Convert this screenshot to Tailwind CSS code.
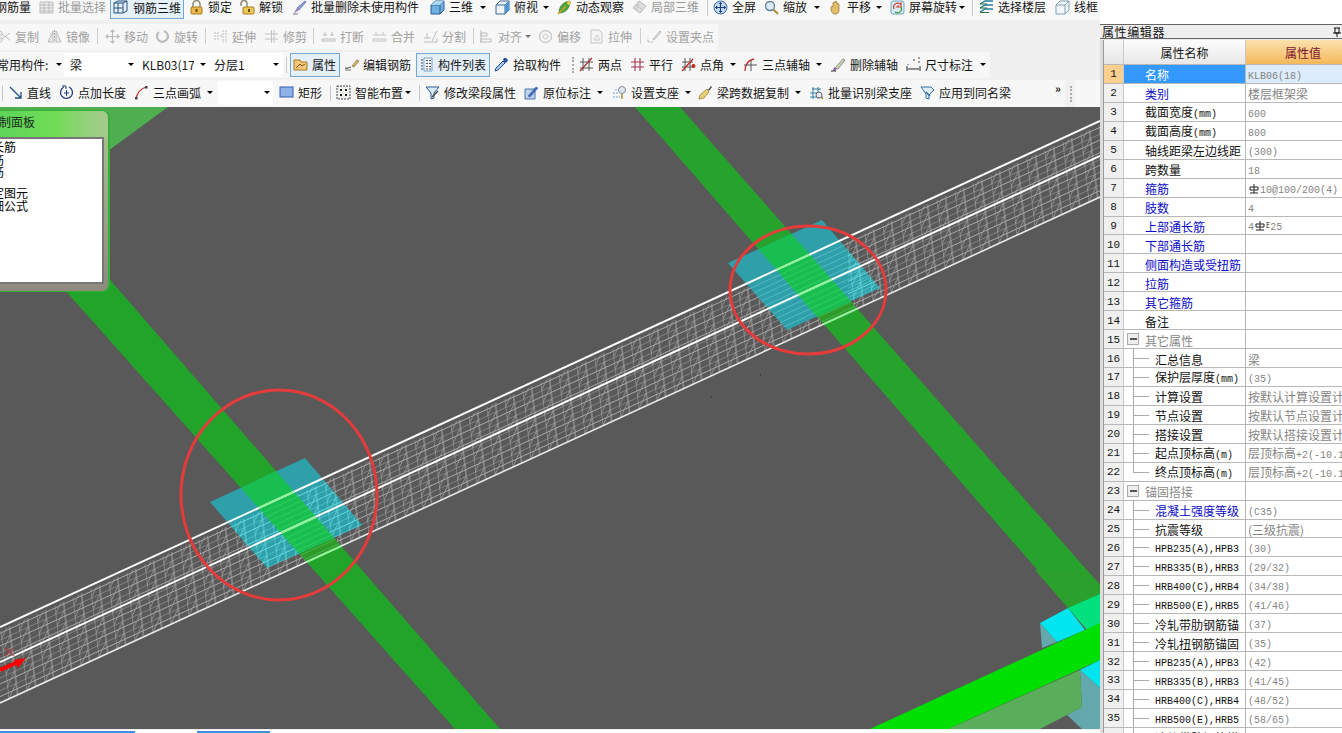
<!DOCTYPE html>
<html lang="zh">
<head>
<meta charset="UTF-8">
<title>属性编辑器</title>
<script src="https://cdn.jsdelivr.net/npm/@tailwindcss/browser@4"></script>
</head>
<body class="bg-[#f0f0f0]">
<!-- toolbar icons -->
<svg class="hidden">
  <symbol id="i-batch" viewBox="0 0 15 15"><path d="M1 2h13v11H1zM1 5h13M1 8h13M1 11h13M5 2v11M10 2v11" fill="#eee" stroke="#bbb"/></symbol>
  <symbol id="i-bar3d" viewBox="0 0 15 15"><path d="M1 3h9v10H1zM1 3l4-2h9l-4 2M14 1v10l-4 2M1 8h9M5 3v10" fill="none" stroke="#24517f"/></symbol>
  <symbol id="i-lock" viewBox="0 0 15 15"><path d="M4 7V4a3.500 3.500 0 0 1 7 0v3" fill="none" stroke="#8a8a70" stroke-width="1.500"/><rect x="2" y="7" width="11" height="7" rx="1" fill="#e9b949" stroke="#a67c1c"/><rect x="6.500" y="9" width="2" height="3" fill="#6b4a10"/></symbol>
  <symbol id="i-unlock" viewBox="0 0 15 15"><path d="M1 6V3.500a3 3 0 0 1 6 0V7" fill="none" stroke="#8a8a70" stroke-width="1.500"/><rect x="3" y="7" width="11" height="7" rx="1" fill="#f0c85a" stroke="#a67c1c"/><rect x="8" y="9" width="2" height="3" fill="#6b4a10"/></symbol>
  <symbol id="i-pen" viewBox="0 0 15 15"><path d="M13 1l1 1-7 8-2-2z" fill="#8aa7d8" stroke="#4a5f9a" stroke-width=".7"/><path d="M5 8l2 2-3 2-2 2 1-3z" fill="#a07ac0"/><path d="M1 14h5" stroke="#777"/></symbol>
  <symbol id="i-cube" viewBox="0 0 15 15"><path d="M1 5l4-4h9v9l-4 4H1z" fill="#6fb0e0" stroke="#2a5f8f"/><path d="M1 5h9v9M10 5l4-4" fill="none" stroke="#2a5f8f"/><path d="M1 5l4-4h9l-4 4z" fill="#a9d4f2"/></symbol>
  <symbol id="i-cube2" viewBox="0 0 15 15"><path d="M1 5l4-4h9v9l-4 4H1z" fill="#eef4fa" stroke="#3a6a94"/><path d="M1 5h9v9M10 5l4-4" fill="none" stroke="#3a6a94"/><path d="M10 5l4-4v9l-4 4z" fill="#4f97cf"/></symbol>
  <symbol id="i-orbit" viewBox="0 0 15 15"><path d="M2 13C2 6 6 2 13 1c0 7-4 12-11 12z" fill="#4aa83a" stroke="#2a6a2a" stroke-width=".6"/><path d="M1 14L9 6" stroke="#c9a227" stroke-width="1.500"/><circle cx="12" cy="3" r="2" fill="#e6c84a"/></symbol>
  <symbol id="i-local" viewBox="0 0 15 15"><path d="M7 1l7 5-6 7-7-5z" fill="#ddd" stroke="#bbb"/><path d="M4 5l7 5M7 3l-3 7" stroke="#c4c4c4"/></symbol>
  <symbol id="i-full" viewBox="0 0 15 15"><circle cx="7.500" cy="7.500" r="6.500" fill="#bcd6ef" stroke="#3f6fa8"/><path d="M7.500 2.500v10M2.500 7.500h10M6 4l1.500-1.500L9 4M6 11l1.500 1.500L9 11M4 6L2.500 7.500 4 9M11 6l1.500 1.500L11 9" fill="none" stroke="#1d3f7a"/></symbol>
  <symbol id="i-zoom" viewBox="0 0 15 15"><circle cx="6" cy="6" r="4.500" fill="#dceaf6" stroke="#5f7f9a" stroke-width="1.300"/><path d="M9.500 9.500L14 14" stroke="#b09040" stroke-width="2.200"/></symbol>
  <symbol id="i-pan" viewBox="0 0 15 15"><path d="M3 8c0-2 1-2 2-1V3c0-1 2-1 2 0V2c0-1 2-1 2 0v2c1-1 2 0 2 1v5c0 3-2 4-4 4-3 0-4-3-4-6z" fill="#e0bf6c" stroke="#8f6f20" stroke-width=".7"/></symbol>
  <symbol id="i-rotate" viewBox="0 0 15 15"><rect x="1" y="1" width="13" height="13" rx="2" fill="#d6ecf7" stroke="#6fa8c8"/><path d="M4 9a4 4 0 0 1 6-5l1-1v4H7l1.500-1.500" fill="none" stroke="#d9482b" stroke-width="1.200"/><path d="M11 7a4 4 0 0 1-6 5" fill="none" stroke="#3c9c3c" stroke-width="1.200"/></symbol>
  <symbol id="i-layers" viewBox="0 0 15 15"><path d="M1 4l5-3h8M1 8l5-3h8M1 12l5-3h8" fill="none" stroke="#1f7f9f" stroke-width="1.400"/><path d="M1 4h7M1 8h7M1 12.500h9" stroke="#2f6f40" stroke-width="1.200"/></symbol>
  <symbol id="i-wire" viewBox="0 0 15 15"><path d="M1 5l4-4h9v9l-4 4H1zM1 5h9v9M10 5l4-4" fill="#f4f8fb" stroke="#7f9fb5"/></symbol>
  <symbol id="i-copy" viewBox="0 0 15 15"><circle cx="4" cy="4" r="2" fill="none" stroke="#bbb"/><circle cx="4" cy="11" r="2" fill="none" stroke="#bbb"/><path d="M6 5l8 6M6 10l8-6" stroke="#bbb"/></symbol>
  <symbol id="i-mirror" viewBox="0 0 15 15"><path d="M6 2v11H1zM9 2v11h5z" fill="#e8e8e8" stroke="#bbb"/><path d="M7.500 1v13" stroke="#aaa" stroke-dasharray="2 1"/></symbol>
  <symbol id="i-move" viewBox="0 0 15 15"><path d="M7.500 1v13M1 7.500h13M5.500 3l2-2 2 2M5.500 12l2 2 2-2M3 5.500l-2 2 2 2M12 5.500l2 2-2 2" fill="none" stroke="#bbb" stroke-width="1.200"/></symbol>
  <symbol id="i-turn" viewBox="0 0 15 15"><path d="M4 3a5.500 5.500 0 1 0 5-1" fill="none" stroke="#bbb" stroke-width="2.200"/></symbol>
  <symbol id="i-extend" viewBox="0 0 15 15"><path d="M1 4h6M1 7h9M1 10h6M13 1v13M10 1v13" fill="none" stroke="#bbb" stroke-dasharray="2 1"/></symbol>
  <symbol id="i-trim" viewBox="0 0 15 15"><path d="M1 5h13M1 10h13M7.500 1v13M10 1v13" fill="none" stroke="#c2c2c2"/></symbol>
  <symbol id="i-break" viewBox="0 0 15 15"><path d="M1 12h13v-2H1zM4 3v3M11 3v3M2 6h4M9 6h4" fill="none" stroke="#bbb"/></symbol>
  <symbol id="i-merge" viewBox="0 0 15 15"><path d="M1 12h13v-2H1zM4 3v3M11 3v3M1 6h13" fill="none" stroke="#c4c4c4"/></symbol>
  <symbol id="i-split" viewBox="0 0 15 15"><path d="M1 13h13V9M1 9h7M4 4v5M9 12l5-10" fill="none" stroke="#bbb"/></symbol>
  <symbol id="i-align" viewBox="0 0 15 15"><path d="M2 1v13M2 4h6v3H2zM2 10h10v3H2z" fill="none" stroke="#bbb"/></symbol>
  <symbol id="i-offset" viewBox="0 0 15 15"><circle cx="7.500" cy="7.500" r="6" fill="none" stroke="#ccc" stroke-width="1.500"/><circle cx="7.500" cy="7.500" r="2.500" fill="none" stroke="#ccc"/></symbol>
  <symbol id="i-stretch" viewBox="0 0 15 15"><path d="M2 1h8l3 3v10H2z" fill="#f4f4f4" stroke="#c4c4c4"/><path d="M5 11l3-5 3 5z" fill="none" stroke="#ccc"/></symbol>
  <symbol id="i-grip" viewBox="0 0 15 15"><path d="M1 13h6M1 13V9" stroke="#bbb" stroke-dasharray="2 1"/><path d="M7 9l6-7 1 1-6 7-2 1z" fill="#eee" stroke="#bbb"/></symbol>
  <symbol id="i-attr" viewBox="0 0 15 15"><path d="M1 3h6l1 2h6v8H1z" fill="#f2c979" stroke="#a87b25"/><path d="M3 11l4-4 2 2 3-2" fill="none" stroke="#8a4b10"/></symbol>
  <symbol id="i-edit" viewBox="0 0 15 15"><path d="M1 11c3 1 4-1 6-1" fill="none" stroke="#333"/><path d="M8 9l5-6 2 1-5 6z" fill="#d7b765" stroke="#6f5a20" stroke-width=".6"/><path d="M1 13h6" stroke="#777"/></symbol>
  <symbol id="i-list" viewBox="0 0 15 15"><path d="M4 1h8v13H4z" fill="#f8fbff" stroke="#7f9fbf"/><path d="M1 3h3M1 6h3M1 9h3M1 12h3M6 3.500h5M6 6.500h5M6 9.500h5M6 12h5" stroke="#456" stroke-dasharray="2 1"/></symbol>
  <symbol id="i-pick" viewBox="0 0 15 15"><path d="M9 4l2 2-7 7-3 1 1-3z" fill="#a7c8ee" stroke="#2a4f9f"/><path d="M9 3l1-2 2 0 2 2-1 2-2 1z" fill="#264f9f"/></symbol>
  <symbol id="i-two" viewBox="0 0 15 15"><path d="M1 5h13M1 11h13M4 1v13M10 1v13" fill="none" stroke="#555"/><path d="M1 14L13 1" stroke="#a33" stroke-width="1.200"/></symbol>
  <symbol id="i-par" viewBox="0 0 15 15"><path d="M1 5h13M1 10h13M5 1v13M10 1v13" fill="none" stroke="#a8344c" stroke-width="1.100"/></symbol>
  <symbol id="i-ang" viewBox="0 0 15 15"><path d="M1 5h11M1 10h11M4 1v13M9 1v13" fill="none" stroke="#555"/><path d="M1 14L12 2" stroke="#c22" stroke-width="1.200"/><circle cx="12.500" cy="9" r="2" fill="#c22"/></symbol>
  <symbol id="i-arcx" viewBox="0 0 15 15"><path d="M2 14C2 7 6 3 11 2" fill="none" stroke="#c22" stroke-width="1.300"/><path d="M1 8h13M8 3v11" stroke="#555"/></symbol>
  <symbol id="i-del" viewBox="0 0 15 15"><path d="M4 11l8-9 2 1-7 9z" fill="#cfd8a8" stroke="#667" stroke-width=".7"/><path d="M3 10l3 3-4 1z" fill="#8a5aa8"/><path d="M0 14h5" stroke="#333"/></symbol>
  <symbol id="i-dim" viewBox="0 0 15 15"><path d="M1 9v5M14 9v5M2 12h11" fill="none" stroke="#222"/><path d="M2 7v1M7 3h2M12 1h2M13 4v2" stroke="#444"/></symbol>
  <symbol id="i-line" viewBox="0 0 15 15"><path d="M2 2l11 11M13 7v6H7" fill="none" stroke="#1f4f7f" stroke-width="1.300"/></symbol>
  <symbol id="i-plen" viewBox="0 0 15 15"><path d="M5 2a6 6 0 1 0 5 0" fill="none" stroke="#1f3f7f" stroke-width="1.300"/><path d="M3 1h4v3M7.500 5v6M5 8h5" fill="none" stroke="#1f3f7f"/></symbol>
  <symbol id="i-arc" viewBox="0 0 15 15"><path d="M2 14C3 8 6 4 12 2" fill="none" stroke="#b33" stroke-width="1.300"/><rect x="1" y="12" width="2.500" height="2.500" fill="#444"/><rect x="11" y="1" width="2.500" height="2.500" fill="#444"/></symbol>
  <symbol id="i-rect" viewBox="0 0 15 15"><rect x="1" y="2" width="13" height="10" fill="#8fb2e6" stroke="#2f5fb0"/></symbol>
  <symbol id="i-smart" viewBox="0 0 15 15"><path d="M1 1h13v13H1z" fill="#eef3ea" stroke="#445" stroke-dasharray="2 1"/><path d="M4 4h2v2H4zM9 4h2v2H9zM4 9h2v2H4zM9 9h2v2H9z" fill="#223"/></symbol>
  <symbol id="i-mod" viewBox="0 0 15 15"><path d="M1 2h13l-5 6v5l-3 1V8z" fill="#dbe8f5" stroke="#2f5f8f"/><path d="M7 12l6-6" stroke="#444" stroke-width="1.400"/></symbol>
  <symbol id="i-orig" viewBox="0 0 15 15"><path d="M1 4h10v10H1z" fill="#bdd3ee" stroke="#4f75a8"/><path d="M4 11l8-9 2 1-8 9z" fill="#3f6fb8" stroke="#234f8f" stroke-width=".5"/></symbol>
  <symbol id="i-supp" viewBox="0 0 15 15"><path d="M1 8h6M3 5h6M1 12h7" stroke="#6fa8d0" stroke-dasharray="2 1"/><circle cx="10" cy="5" r="3.500" fill="#dfe8ee" stroke="#889"/><path d="M10 9v5" stroke="#a08a30" stroke-width="1.400"/></symbol>
  <symbol id="i-brush" viewBox="0 0 15 15"><path d="M10 5l3-4 1 1-3 4z" fill="#445"/><path d="M9 4l2 3-5 6-5 1 1-4z" fill="#e8cf7a" stroke="#8f7420" stroke-width=".7"/></symbol>
  <symbol id="i-bsup" viewBox="0 0 15 15"><path d="M1 12h13M1 8h10M3 4h9M4 2v12M9 2v12" stroke="#2f7f9f"/><circle cx="10" cy="10" r="3" fill="#e6edf3" stroke="#667"/><path d="M12 12l2 2" stroke="#a08a30" stroke-width="1.500"/></symbol>
  <symbol id="i-apply" viewBox="0 0 15 15"><path d="M1 2h10l3 3-5 5v4l-3-1V9z" fill="#e0ecf8" stroke="#2f6fa8"/><path d="M6 7l4 4" stroke="#2f6fa8" stroke-width="1.400"/></symbol>
</svg>

<div class="flex w-[1342px] h-[733px] overflow-hidden font-['Noto_Sans_CJK_SC','Liberation_Sans',sans-serif] text-[12px] leading-[15px] text-[#151515]">
  <div class="w-[1100px] shrink-0 flex flex-col">
    <!-- row 1 -->
    <div class="flex items-start h-[20px] mb-[4px] bg-[#f8f8f8] whitespace-nowrap leading-[13px]">
      <span class="w-[39px] shrink-0 -indent-[5px]">钢筋量</span>
      <span class="w-[71px] shrink-0 flex text-[#9a9a9a]"><svg class="w-[15px] h-[15px] mr-[4px]"><use href="#i-batch"/></svg>批量选择</span>
      <span class="w-[74px] h-[20px] -mt-px mr-[5px] pb-[3px] shrink-0 flex items-center pl-[2px] border border-[#6fa8d8] bg-[#e6f1fb]"><svg class="w-[15px] h-[15px] mr-[5px]"><use href="#i-bar3d"/></svg>钢筋三维</span>
      <span class="w-[51px] shrink-0 flex"><svg class="w-[15px] h-[15px] mr-[4px]"><use href="#i-lock"/></svg>锁定</span>
      <span class="w-[52px] shrink-0 flex"><svg class="w-[15px] h-[15px] mr-[4px]"><use href="#i-unlock"/></svg>解锁</span>
      <span class="w-[138px] shrink-0 flex"><svg class="w-[15px] h-[15px] mr-[4px]"><use href="#i-pen"/></svg>批量删除未使用构件</span>
      <span class="w-[65px] shrink-0 flex items-start"><svg class="w-[15px] h-[15px] mr-[4px]"><use href="#i-cube"/></svg>三维<i class="ml-[7px] mt-[6px] w-0 h-0 border-x-[3px] border-x-transparent border-t-[3px] border-t-black"></i></span>
      <span class="w-[62px] shrink-0 flex items-start"><svg class="w-[15px] h-[15px] mr-[4px]"><use href="#i-cube2"/></svg>俯视<i class="ml-[5px] mt-[6px] w-0 h-0 border-x-[3px] border-x-transparent border-t-[3px] border-t-black"></i></span>
      <span class="w-[75px] shrink-0 flex"><svg class="w-[15px] h-[15px] mr-[4px]"><use href="#i-orbit"/></svg>动态观察</span>
      <span class="w-[75px] shrink-0 flex text-[#9a9a9a]"><svg class="w-[15px] h-[15px] mr-[4px]"><use href="#i-local"/></svg>局部三维</span>
      <i class="w-px h-[16px] bg-[#c8c8c8]"></i>
      <span class="ml-[5px] w-[51px] shrink-0 flex"><svg class="w-[15px] h-[15px] mr-[4px]"><use href="#i-full"/></svg>全屏</span>
      <span class="w-[64px] shrink-0 flex items-start"><svg class="w-[15px] h-[15px] mr-[4px]"><use href="#i-zoom"/></svg>缩放<i class="ml-[7px] mt-[6px] w-0 h-0 border-x-[3px] border-x-transparent border-t-[3px] border-t-black"></i></span>
      <span class="w-[62px] shrink-0 flex items-start"><svg class="w-[15px] h-[15px] mr-[4px]"><use href="#i-pan"/></svg>平移<i class="ml-[5px] mt-[6px] w-0 h-0 border-x-[3px] border-x-transparent border-t-[3px] border-t-black"></i></span>
      <span class="w-[82px] shrink-0 flex items-start"><svg class="w-[15px] h-[15px] mr-[4px]"><use href="#i-rotate"/></svg>屏幕旋转<i class="ml-[2px] mt-[6px] w-0 h-0 border-x-[3px] border-x-transparent border-t-[3px] border-t-black"></i></span>
      <i class="w-px h-[16px] bg-[#c8c8c8]"></i>
      <span class="ml-[6px] w-[76px] shrink-0 flex"><svg class="w-[15px] h-[15px] mr-[4px]"><use href="#i-layers"/></svg>选择楼层</span>
      <span class="shrink-0 flex"><svg class="w-[15px] h-[15px] mr-[4px]"><use href="#i-wire"/></svg>线框</span>
    </div>
    <!-- row 2, greyed out -->
    <div class="flex items-center w-[718px] h-[26px] mb-[2px] pb-[2px] bg-[#f7f7f7] text-[#a2a2a2] whitespace-nowrap overflow-hidden">
      <span class="w-[51px] -ml-[4px] shrink-0 flex"><svg class="w-[15px] h-[15px] mr-[4px]"><use href="#i-copy"/></svg>复制</span>
      <span class="w-[50px] shrink-0 flex"><svg class="w-[15px] h-[15px] mr-[4px]"><use href="#i-mirror"/></svg>镜像</span>
      <i class="w-px h-[16px] bg-[#cfcfcf]"></i>
      <span class="ml-[7px] w-[50px] shrink-0 flex"><svg class="w-[15px] h-[15px] mr-[4px]"><use href="#i-move"/></svg>移动</span>
      <span class="w-[50px] shrink-0 flex"><svg class="w-[15px] h-[15px] mr-[4px]"><use href="#i-turn"/></svg>旋转</span>
      <i class="w-px h-[16px] bg-[#cfcfcf]"></i>
      <span class="ml-[7px] w-[51px] shrink-0 flex"><svg class="w-[15px] h-[15px] mr-[4px]"><use href="#i-extend"/></svg>延伸</span>
      <span class="w-[49px] shrink-0 flex"><svg class="w-[15px] h-[15px] mr-[4px]"><use href="#i-trim"/></svg>修剪</span>
      <i class="w-px h-[16px] bg-[#cfcfcf]"></i>
      <span class="ml-[7px] w-[51px] shrink-0 flex"><svg class="w-[15px] h-[15px] mr-[4px]"><use href="#i-break"/></svg>打断</span>
      <span class="w-[51px] shrink-0 flex"><svg class="w-[15px] h-[15px] mr-[4px]"><use href="#i-merge"/></svg>合并</span>
      <span class="w-[50px] shrink-0 flex"><svg class="w-[15px] h-[15px] mr-[4px]"><use href="#i-split"/></svg>分割</span>
      <i class="w-px h-[16px] bg-[#cfcfcf]"></i>
      <span class="ml-[5px] w-[59px] shrink-0 flex items-center"><svg class="w-[15px] h-[15px] mr-[4px]"><use href="#i-align"/></svg>对齐<i class="ml-[3px] w-0 h-0 border-x-[3px] border-x-transparent border-t-[3px] border-t-[#777]"></i></span>
      <span class="w-[51px] shrink-0 flex"><svg class="w-[15px] h-[15px] mr-[4px]"><use href="#i-offset"/></svg>偏移</span>
      <span class="w-[51px] shrink-0 flex"><svg class="w-[15px] h-[15px] mr-[4px]"><use href="#i-stretch"/></svg>拉伸</span>
      <i class="w-px h-[16px] bg-[#cfcfcf]"></i>
      <span class="ml-[6px] shrink-0 flex"><svg class="w-[15px] h-[15px] mr-[4px]"><use href="#i-grip"/></svg>设置夹点</span>
    </div>
    <!-- row 3 -->
    <div class="flex items-center w-[990px] h-[26px] mb-[2px] bg-[#f7f7f7] whitespace-nowrap">
      <span class="w-[64px] shrink-0 flex items-center pb-[2px]"><span class="w-[51px] overflow-hidden -indent-[3px]">常用构件:</span><i class="ml-[5px] w-0 h-0 border-x-[3px] border-x-transparent border-t-[3px] border-t-black"></i></span>
      <span class="w-[74px] h-[24px] pb-[2px] shrink-0 flex items-center pl-[6px] bg-white">梁<i class="ml-[46px] w-0 h-0 border-x-[3px] border-x-transparent border-t-[3px] border-t-black"></i></span>
      <span class="w-[70px] h-[24px] pb-[2px] shrink-0 flex items-center pl-[4px] bg-white"><span class="w-[52px] overflow-hidden">KLB03(17)</span><i class="ml-[6px] w-0 h-0 border-x-[3px] border-x-transparent border-t-[3px] border-t-black"></i></span>
      <span class="w-[75px] h-[24px] pb-[2px] shrink-0 flex items-center pl-[6px] bg-white">分层1<i class="ml-[28px] w-0 h-0 border-x-[3px] border-x-transparent border-t-[3px] border-t-black"></i></span>
      <i class="ml-[3px] w-px h-[16px] bg-[#c8c8c8]"></i>
      <span class="ml-[3px] w-[50px] h-[24px] pb-[2px] shrink-0 flex items-center pl-[2px] border border-[#6fa8d8] bg-[#e4effa]"><svg class="w-[15px] h-[15px] mr-[4px]"><use href="#i-attr"/></svg>属性</span>
      <span class="ml-[4px] w-[72px] pb-[2px] shrink-0 flex"><svg class="w-[15px] h-[15px] mr-[4px]"><use href="#i-edit"/></svg>编辑钢筋</span>
      <span class="w-[74px] h-[24px] pb-[2px] shrink-0 flex items-center pl-[3px] border border-[#6fa8d8] bg-[#e4effa]"><svg class="w-[15px] h-[15px] mr-[3px]"><use href="#i-list"/></svg>构件列表</span>
      <span class="ml-[4px] w-[78px] pb-[2px] shrink-0 flex"><svg class="w-[15px] h-[15px] mr-[4px]"><use href="#i-pick"/></svg>拾取构件</span>
      <i class="w-[2px] h-[16px] border-l-2 border-dotted border-[#aaa]"></i>
      <span class="ml-[5px] w-[51px] pb-[2px] shrink-0 flex"><svg class="w-[15px] h-[15px] mr-[4px]"><use href="#i-two"/></svg>两点</span>
      <span class="w-[51px] pb-[2px] shrink-0 flex"><svg class="w-[15px] h-[15px] mr-[4px]"><use href="#i-par"/></svg>平行</span>
      <span class="w-[62px] pb-[2px] shrink-0 flex items-center"><svg class="w-[15px] h-[15px] mr-[4px]"><use href="#i-ang"/></svg>点角<i class="ml-[6px] w-0 h-0 border-x-[3px] border-x-transparent border-t-[3px] border-t-black"></i></span>
      <span class="w-[88px] pb-[2px] shrink-0 flex items-center"><svg class="w-[15px] h-[15px] mr-[4px]"><use href="#i-arcx"/></svg>三点辅轴<i class="ml-[6px] w-0 h-0 border-x-[3px] border-x-transparent border-t-[3px] border-t-black"></i></span>
      <span class="w-[75px] pb-[2px] shrink-0 flex"><svg class="w-[15px] h-[15px] mr-[4px]"><use href="#i-del"/></svg>删除辅轴</span>
      <span class="shrink-0 pb-[2px] flex items-center"><svg class="w-[15px] h-[15px] mr-[4px]"><use href="#i-dim"/></svg>尺寸标注<i class="ml-[7px] w-0 h-0 border-x-[3px] border-x-transparent border-t-[3px] border-t-black"></i></span>
    </div>
    <!-- row 4 -->
    <div class="flex items-center h-[27px] whitespace-nowrap">
      <div class="flex items-center w-[1065px] h-[27px] pb-[2px] bg-[#f7f7f7]">
        <i class="ml-[2px] w-px h-[16px] bg-[#c8c8c8]"></i>
        <span class="ml-[5px] w-[51px] shrink-0 flex"><svg class="w-[15px] h-[15px] mr-[4px]"><use href="#i-line"/></svg>直线</span>
        <span class="w-[75px] shrink-0 flex"><svg class="w-[15px] h-[15px] mr-[4px]"><use href="#i-plen"/></svg>点加长度</span>
        <span class="w-[84px] shrink-0 flex items-center"><svg class="w-[15px] h-[15px] mr-[4px]"><use href="#i-arc"/></svg>三点画弧<i class="ml-[6px] w-0 h-0 border-x-[3px] border-x-transparent border-t-[3px] border-t-black"></i></span>
        <span class="w-[55px] h-[24px] shrink-0 flex items-center justify-end pr-[3px] bg-white"><i class="w-0 h-0 border-x-[3px] border-x-transparent border-t-[3px] border-t-black"></i></span>
        <span class="ml-[6px] w-[51px] shrink-0 flex"><svg class="w-[15px] h-[15px] mr-[4px]"><use href="#i-rect"/></svg>矩形</span>
        <i class="w-px h-[16px] bg-[#c8c8c8]"></i>
        <span class="ml-[5px] w-[83px] shrink-0 flex items-center"><svg class="w-[15px] h-[15px] mr-[4px]"><use href="#i-smart"/></svg>智能布置<i class="ml-[2px] w-0 h-0 border-x-[3px] border-x-transparent border-t-[3px] border-t-black"></i></span>
        <i class="w-px h-[16px] bg-[#c8c8c8]"></i>
        <span class="ml-[5px] w-[99px] shrink-0 flex"><svg class="w-[15px] h-[15px] mr-[4px]"><use href="#i-mod"/></svg>修改梁段属性</span>
        <span class="w-[88px] shrink-0 flex items-center"><svg class="w-[15px] h-[15px] mr-[4px]"><use href="#i-orig"/></svg>原位标注<i class="ml-[6px] w-0 h-0 border-x-[3px] border-x-transparent border-t-[3px] border-t-black"></i></span>
        <span class="w-[86px] shrink-0 flex items-center"><svg class="w-[15px] h-[15px] mr-[4px]"><use href="#i-supp"/></svg>设置支座<i class="ml-[6px] w-0 h-0 border-x-[3px] border-x-transparent border-t-[3px] border-t-black"></i></span>
        <span class="w-[111px] shrink-0 flex items-center"><svg class="w-[15px] h-[15px] mr-[4px]"><use href="#i-brush"/></svg>梁跨数据复制<i class="ml-[6px] w-0 h-0 border-x-[3px] border-x-transparent border-t-[3px] border-t-black"></i></span>
        <span class="w-[111px] shrink-0 flex"><svg class="w-[15px] h-[15px] mr-[4px]"><use href="#i-bsup"/></svg>批量识别梁支座</span>
        <span class="w-[135px] shrink-0 flex"><svg class="w-[15px] h-[15px] mr-[4px]"><use href="#i-apply"/></svg>应用到同名梁</span>
        <span class="-mt-[8px] font-bold text-[11px]">»</span>
      </div>
      <i class="ml-[5px] w-[2px] h-[16px] border-l-2 border-dotted border-[#aaa]"></i>
      <div class="ml-[3px] w-[25px] h-[27px] bg-[#f7f7f7]"></div>
    </div>

    <!-- 3D view -->
    <div class="relative w-[1100px] h-[622px] overflow-hidden bg-[#595959]">
      <svg class="block w-[1100px] h-[622px]" viewBox="0 107 1100 622">
        <defs>
          <pattern id="meshGrey" width="18" height="12" patternUnits="userSpaceOnUse" patternTransform="matrix(1 -0.46 0.12 1 0 627)"><path d="M0 0H18M0 6H18M0 0V12M9 0V12" fill="none" stroke="#aeaaaa" stroke-width=".9"/><path d="M0 12L9 0" fill="none" stroke="#a8a4a4" stroke-width=".9"/></pattern>
          <pattern id="meshCyan" width="18" height="12" patternUnits="userSpaceOnUse" patternTransform="matrix(1 -0.46 0.12 1 0 627)"><path d="M0 0H18M0 6H18M0 0V12M9 0V12M0 12L9 0" fill="none" stroke="#66dbe0" stroke-width=".9"/></pattern>
          <pattern id="ribCyan" width="10" height="6" patternUnits="userSpaceOnUse" patternTransform="matrix(1 -0.46 0 1 0 627)"><path d="M0 0H10" fill="none" stroke="#7ae0e5" stroke-width=".9"/></pattern>
          <pattern id="ribGreen" width="10" height="6" patternUnits="userSpaceOnUse" patternTransform="matrix(1 -0.46 0 1 0 627)"><path d="M0 0H10" fill="none" stroke="#4fdc6f" stroke-width=".9"/></pattern>
          <clipPath id="beam"><polygon points="0,627 1100,121 1100,197 0,703"/></clipPath>
          <clipPath id="mesh"><polygon points="0,631 1100,125 1100,197 0,703"/></clipPath>
          <clipPath id="plate1"><polygon points="305,458 362,525 267,568 210,502"/></clipPath>
          <clipPath id="plate2"><polygon points="822,220 880,288 787,330 728,263"/></clipPath>
          <clipPath id="bands"><polygon points="0,153 500,729 455,729 0,217"/><polygon points="635,107 680,107 1100,585 1100,642"/></clipPath>
        </defs>
        <polygon points="30,107 168,107 0,230 0,107" fill="#4fae50"/>
        <polygon points="0,153 500,729 455,729 0,217" fill="#22a42a"/>
        <polygon points="635,107 680,107 1100,585 1100,642" fill="#26a32d"/>

        <rect x="0" y="107" width="1100" height="622" fill="url(#meshGrey)" clip-path="url(#mesh)"/>
        <g clip-path="url(#beam)"><rect x="0" y="107" width="1100" height="622" fill="#2f9a2a" clip-path="url(#bands)"/><rect x="0" y="107" width="1100" height="622" fill="url(#ribGreen)" clip-path="url(#bands)"/></g>

        <polygon points="305,458 362,525 267,568 210,502" fill="#2f9fa9"/>
        <polygon points="822,220 880,288 787,330 728,263" fill="#2f9fa9"/>
        <g clip-path="url(#plate1)"><rect x="0" y="107" width="1100" height="622" fill="#18bf50" clip-path="url(#bands)"/></g>
        <g clip-path="url(#plate2)"><rect x="0" y="107" width="1100" height="622" fill="#18bf50" clip-path="url(#bands)"/></g>
        <g clip-path="url(#mesh)">
          <g clip-path="url(#plate1)"><rect x="200" y="440" width="170" height="140" fill="url(#meshCyan)"/><rect x="200" y="440" width="170" height="140" fill="#18bf50" clip-path="url(#bands)"/><rect x="200" y="440" width="170" height="140" fill="url(#ribGreen)" clip-path="url(#bands)"/></g>
          <g clip-path="url(#plate2)"><rect x="720" y="210" width="170" height="130" fill="url(#ribCyan)"/><rect x="848" y="210" width="40" height="130" fill="url(#meshCyan)"/><rect x="720" y="210" width="170" height="130" fill="#18bf50" clip-path="url(#bands)"/><rect x="720" y="210" width="170" height="130" fill="url(#ribGreen)" clip-path="url(#bands)"/></g>
        </g>

        <path d="M0 627L1100 121M0 662L1100 156" stroke="#fff" stroke-width="2" fill="none"/>
        <path d="M0 703L1100 197" stroke="#e8e8e8" stroke-width="1.600" fill="none"/>
        <path d="M0 627L1100 121M0 662L1100 156M0 703L1100 197" stroke="#8ff09a" stroke-width="2" fill="none" clip-path="url(#bands)"/>

        <ellipse cx="279" cy="495" rx="98" ry="105" fill="none" stroke="#e53b3b" stroke-width="3"/>
        <ellipse cx="808" cy="290" rx="78" ry="64" fill="none" stroke="#e53b3b" stroke-width="3"/>

        <!-- column and beams, lower right -->
        <polygon points="1035,570 1087,570 1100,585 1100,595 1068,608" fill="#2ca02c"/>
        <polygon points="1040,623 1057,642 1042,648" fill="#62a8ad"/>
        <polygon points="1040,623 1068,608 1085,630 1057,642" fill="#00e5ee"/>
        <polygon points="1068,608 1100,594 1100,623 1087,630" fill="#00e07c"/>
        <polygon points="1080,670 1100,660 1100,688" fill="#00e5ee"/>
        <polygon points="1080,670 1100,688 1100,729 1082,729 1067,715 1082,707" fill="#62a8ad"/>
        <polygon points="948,729 1080,670 1082,707 1067,715 1040,729" fill="#5aad5a"/>
        <polygon points="870,729 1100,623 1100,660 948,729" fill="#00e000"/>

        <!-- axis marker -->
        <path d="M0 670L16 663" stroke="#f00" stroke-width="4"/>
        <polygon points="14,660 26,658 18,668" fill="#f00"/>
        <path d="M5 648L14 656M13 648L5 656" stroke="#b33" stroke-width="1.500" opacity=".7"/>
        <path d="M760 375h1M711 397h1" stroke="#222"/>
      </svg>

      <!-- floating control panel -->
      <div class="absolute left-0 top-[3px] w-[110px] h-[182px] rounded-r-[8px] border-r-2 border-y border-[#35b035] bg-gradient-to-b from-[#a5c98d] to-[#8f8a7f] overflow-hidden">
        <div class="h-[26px] pt-[3px] bg-gradient-to-r from-[#5ed45a] via-[#6fdc55] to-[#a5c98d] -indent-[1px] text-[#1d2a1d]">制面板</div>
        <div class="w-[104px] h-[147px] pt-[2px] bg-white border-[2px] border-l-0 border-[#777] overflow-hidden leading-[12.5px] text-black whitespace-nowrap">
          <p class="-ml-[8px]">长筋</p>
          <p class="-ml-[8px]">筋</p>
          <p class="-ml-[8px]">筋</p>
          <p class="h-[8.500px]"></p>
          <p class="-ml-[8px]">定图元</p>
          <p class="-ml-[8px]">细公式</p>
        </div>
      </div>
    </div>
    <!-- taskbar edge -->
    <div class="flex h-[3px] mt-px bg-white">
      <i class="w-[135px] h-[2px] mt-px bg-[#3a8fe0]"></i>
      <i class="ml-[62px] w-[73px] h-[2px] mt-px bg-[#3a8fe0]"></i>
    </div>
  </div>

  <!-- property editor -->
  <div class="w-[242px] shrink-0 bg-white flex flex-col">
    <div class="h-[24px] shrink-0"></div>
    <div class="h-[15px] shrink-0 flex items-center justify-between pl-[2px] pr-[1px] border-y border-[#666] bg-[#efefef] tracking-[0.6px]">属性编辑器
      <svg class="w-[8px] h-[10px]" viewBox="0 0 8 10"><path d="M1 1h6M2 1v5h4V1M0 6h8M4 6v4" fill="none" stroke="#111"/></svg>
    </div>
    <div class="flex-1 flex bg-[#ececec] pt-[1px] overflow-hidden">
      <i class="w-[3px] shrink-0 bg-[#dcdcdc]"></i>
      <div id="table" class="w-[239px] border-l border-[#9a9a9a] bg-white">
        <div class="flex h-[25px] border-b border-[#b8b8b8]">
          <div class="w-[20px] bg-gradient-to-b from-[#f8f8f8] to-[#e6e6e6] border-r border-[#c8c8c8]"></div>
          <div class="w-[122px] flex items-center justify-center bg-gradient-to-b from-[#fdfdfd] to-[#e8e8e8] border-r border-[#c8c8c8]">属性名称</div>
          <div class="flex-1 flex items-center pl-[39px] bg-gradient-to-b from-[#fbe2ad] to-[#f4b858] text-[#7c1330]">属性值</div>
        </div>
      </div>
    </div>
  </div>
</div>

<script>
// m = small latin text, bar = rebar grade mark
const m = s => `<span class="font-['Liberation_Mono',monospace] text-[10px]">${s}</span>`;
const bar = `<svg class="inline-block w-[10px] h-[10px] ml-[1px] mr-[1px] align-[-1px]" viewBox="0 0 10 10"><path d="M1 3h8v3H1zM5 0v9M1 9h8" fill="none" stroke="#222"/></svg>`;
// [name, value, kind]  kind: s=selected, b=blue, g=group header, t=tree child, T=blue tree child, e=last child
const rows = [
  ['名称', m('KLB06(18)'), 's'],
  ['类别', '楼层框架梁', 'b'],
  ['截面宽度' + m('(mm)'), m('600')],
  ['截面高度' + m('(mm)'), m('800')],
  ['轴线距梁左边线距', m('(300)')],
  ['跨数量', m('18')],
  ['箍筋', bar + m('10@100/200(4)'), 'b'],
  ['肢数', m('4'), 'b'],
  ['上部通长筋', m('4') + bar + `<span class="text-[7px] text-[#222] align-[2px]">E</span>` + m('25'), 'b'],
  ['下部通长筋', '', 'b'],
  ['侧面构造或受扭筋', '', 'b'],
  ['拉筋', '', 'b'],
  ['其它箍筋', '', 'b'],
  ['备注', ''],
  ['其它属性', '', 'g'],
  ['汇总信息', '梁', 't'],
  ['保护层厚度' + m('(mm)'), m('(35)'), 't'],
  ['计算设置', '按默认计算设置计', 't'],
  ['节点设置', '按默认节点设置计', 't'],
  ['搭接设置', '按默认搭接设置计', 't'],
  ['起点顶标高' + m('(m)'), '层顶标高' + m('+2(-10.1'), 't'],
  ['终点顶标高' + m('(m)'), '层顶标高' + m('+2(-10.1'), 'e'],
  ['锚固搭接', '', 'g'],
  ['混凝土强度等级', m('(C35)'), 'T'],
  ['抗震等级', '(三级抗震)', 't'],
  [m('HPB235(A),HPB3'), m('(30)'), 't'],
  [m('HRB335(B),HRB3'), m('(29/32)'), 't'],
  [m('HRB400(C),HRB4'), m('(34/38)'), 't'],
  [m('HRB500(E),HRB5'), m('(41/46)'), 't'],
  ['冷轧带肋钢筋锚', m('(37)'), 't'],
  ['冷轧扭钢筋锚固', m('(35)'), 't'],
  [m('HPB235(A),HPB3'), m('(42)'), 't'],
  [m('HRB335(B),HRB3'), m('(41/45)'), 't'],
  [m('HRB400(C),HRB4'), m('(48/52)'), 't'],
  [m('HRB500(E),HRB5'), m('(58/65)'), 't'],
  ['冷轧带肋钢筋搭', '', 't'],
];
const table = document.getElementById('table');
table.insertAdjacentHTML('beforeend', rows.map(([name, val, kind], i) => {
  const sel = kind === 's';
  const tree = kind === 't' || kind === 'T' || kind === 'e';
  const nameCol = sel ? 'bg-[#3399ff] text-white pl-[21px]'
    : kind === 'b' ? 'text-[#0a0ac8] pl-[21px]'
    : kind === 'g' ? 'text-[#888] pl-[21px]'
    : kind === 'T' ? 'text-[#0a0ac8] pl-[31px]'
    : tree ? 'text-[#111] pl-[31px]' : 'text-[#111] pl-[21px]';
  const vline = kind === 'e'
    ? '<i class="absolute left-[9px] top-0 h-[9px] w-px bg-[#aaa]"></i>'
    : tree ? '<i class="absolute left-[9px] top-0 h-[19px] w-px bg-[#aaa]"></i>' : '';
  const hline = tree ? '<i class="absolute left-[9px] top-[9px] w-[16px] h-px bg-[#aaa]"></i>' : '';
  const box = kind === 'g'
    ? '<i class="absolute left-[3px] top-[3px] w-[12px] h-[12px] flex items-center justify-center border border-[#aaa] bg-[#eee]"><b class="w-[7px] h-[2px] bg-[#555]"></b></i>' : '';
  return '<div class="flex h-[18.940px] border-b border-[#b8b8b8] whitespace-nowrap">'
    + `<div class="w-[20px] shrink-0 pt-[2px] flex items-center justify-center font-['Liberation_Mono',monospace] text-[11px] border-r border-[#c8c8c8] `
    + (sel ? 'bg-[#fbd08f]' : 'bg-[#f0f0f0]') + '">' + (i + 1) + '</div>'
    + '<div class="relative w-[122px] pt-[2px] shrink-0 flex items-center border-r border-[#b8b8b8] overflow-hidden ' + nameCol + '">' + vline + hline + box + '<span>' + name + '</span></div>'
    + '<div class="flex-1 pt-[2px] flex items-center pl-[2px] overflow-hidden text-[#858585] ' + (sel ? 'bg-[#dcecfb]' : '') + '"><span>' + val + '</span></div>'
    + '</div>';
}).join(''));
</script>
</body>
</html>
